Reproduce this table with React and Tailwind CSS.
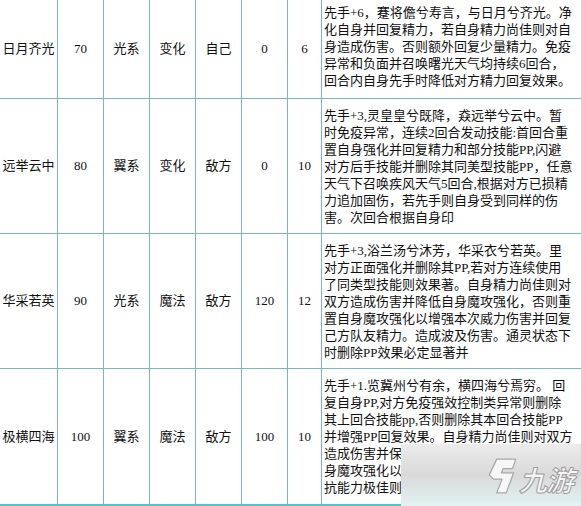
import React from "react";

const rows = [
  {
    name: "日月齐光",
    power: "70",
    attr: "光系",
    kind: "变化",
    target: "自己",
    dmg: "0",
    pp: "6",
    h: "h-[99px]",
    shift: "pb-[5px]",
    lines: [
      "先手+6，蹇将儋兮寿言，与日月兮齐光。净",
      "化自身并回复精力，若自身精力尚佳则对自",
      "身造成伤害。否则额外回复少量精力。免疫",
      "异常和负面并召唤曙光天气均持续6回合，",
      "回合内自身先手时降低对方精力回复效果。",
    ],
  },
  {
    name: "远举云中",
    power: "80",
    attr: "翼系",
    kind: "变化",
    target: "敌方",
    dmg: "0",
    pp: "10",
    h: "h-[135px]",
    shift: "",
    lines: [
      "先手+3,灵皇皇兮既降，猋远举兮云中。暂",
      "时免疫异常，连续2回合发动技能:首回合重",
      "置自身强化并回复精力和部分技能PP,闪避",
      "对方后手技能并删除其同美型技能PP，任意",
      "天气下召唤疾风天气5回合,根据对方已损精",
      "力追加固伤，若先手则自身受到同样的伤",
      "害。次回合根据自身印",
    ],
  },
  {
    name: "华采若英",
    power: "90",
    attr: "光系",
    kind: "魔法",
    target: "敌方",
    dmg: "120",
    pp: "12",
    h: "h-[135px]",
    shift: "",
    lines: [
      "先手+3,浴兰汤兮沐芳，华采衣兮若英。里",
      "对方正面强化并删除其PP,若对方连续使用",
      "了同类型技能则效果著。自身精力尚佳则对",
      "双方造成伤害并降低自身魔攻强化，否则重",
      "置自身魔攻强化以增强本次威力伤害并回复",
      "己方队友精力。造成波及伤害。通灵状态下",
      "时删除PP效果必定显著并",
    ],
  },
  {
    name: "极横四海",
    power: "100",
    attr: "翼系",
    kind: "魔法",
    target: "敌方",
    dmg: "100",
    pp: "10",
    h: "h-[137px]",
    shift: "",
    last: true,
    // the ends of the last three lines sit under the watermark
    lines: [
      "先手+1.览冀州兮有余，横四海兮焉穷。 回",
      "复自身PP,对方免疫强效控制类异常则删除",
      "其上回合技能pp,否则删除其本回合技能PP",
      "并增强PP回复效果。自身精力尚佳则对双方",
      "造成伤害并保",
      "身魔攻强化以",
      "抗能力极佳则",
    ],
  },
];

function Cell({ w, children }) {
  return (
    <div
      className={`${w} shrink-0 flex items-center justify-center border-r border-[#78b8c2]`}
    >
      {children}
    </div>
  );
}

function Row({ r }) {
  const bottom = r.last
    ? "border-b-2 border-[#4ec2da]"
    : "border-b border-[#78b8c2]";
  return (
    <div className={`flex ${r.h} ${bottom}`}>
      <Cell w="w-[58px]">{r.name}</Cell>
      <Cell w="w-[46px]">{r.power}</Cell>
      <Cell w="w-[46px]">{r.attr}</Cell>
      <Cell w="w-[46px]">{r.kind}</Cell>
      <Cell w="w-[46px]">{r.target}</Cell>
      <Cell w="w-[46px]">{r.dmg}</Cell>
      <Cell w="w-[34px]">{r.pp}</Cell>
      <div className={`flex-1 flex items-center pl-[2px] ${r.shift}`}>
        <div className="leading-[17px] whitespace-pre">
          {r.lines.map((l, i) => (
            <div key={i}>{l}</div>
          ))}
        </div>
      </div>
    </div>
  );
}

function Watermark() {
  return (
    <div className="absolute left-[401px] top-[444px] w-[180px] h-[62px] bg-gradient-to-b from-[#ececec] via-[#d9d9d9] to-[#e3f3f3] flex items-center justify-end pr-[8px] gap-[2px]">
      <svg width="30" height="38" viewBox="0 0 28 36" className="mt-[2px]">
        <path
          d="M9 2 L27 2 L24 11 L15 11 L13.5 15 L25 15 L18 34 L9 34 L14 21 L6 21 L2 17 Z"
          fill="#f7f7f7"
          stroke="#a8a8a8"
          strokeWidth="1.2"
          strokeLinejoin="round"
        />
      </svg>
      <span className="italic font-bold text-[28px] leading-none text-[#f7f7f7] [-webkit-text-stroke:1px_#a0a0a0] font-['Noto_Sans_CJK_SC',sans-serif] tracking-[-1px] mt-[8px]">
        九游
      </span>
    </div>
  );
}

export default function App() {
  return (
    <div className="relative w-[581px] h-[506px] overflow-hidden bg-white text-[13px] text-[#111] font-['Liberation_Serif','Noto_Sans_CJK_SC',serif]">
      {rows.map((r) => (
        <Row key={r.name} r={r} />
      ))}
      <Watermark />
    </div>
  );
}
